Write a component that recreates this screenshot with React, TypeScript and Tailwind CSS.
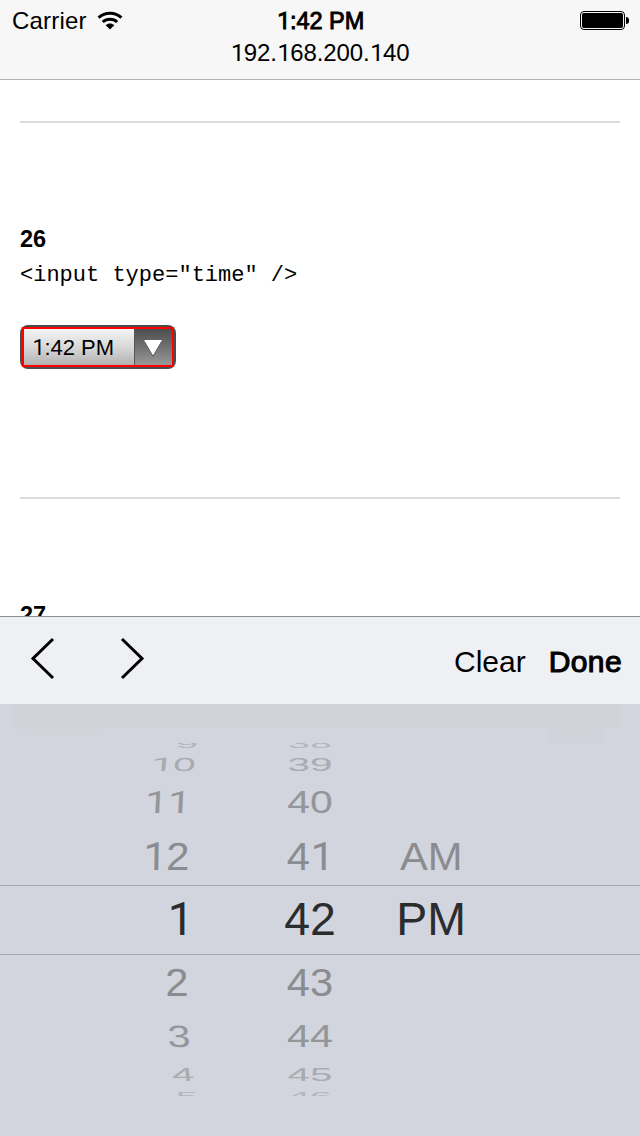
import { Fragment } from "react";

/** Text whose digit "1" is drawn without a foot serif. */
function Label({ text }: { text: string }) {
  return (
    <>
      {text.split(/(1)/).map((part, i) =>
        part === "1" ? (
          <span key={i} className="relative left-[0.02em] font-[Roboto,sans-serif] leading-[0]">1</span>
        ) : (
          <Fragment key={i}>{part}</Fragment>
        ),
      )}
    </>
  );
}

function StatusBar() {
  return (
    <header className="h-20 shrink-0 border-b border-[#b2b2b2] bg-[#f7f7f7]">
      <div className="grid h-[41px] grid-cols-3 items-center pr-[11px] pl-3">
        <div className="flex items-center gap-[10px]">
          <span className="text-[24px] leading-[41px] tracking-[0.2px]">Carrier</span>
          <svg width="26" height="20" viewBox="0 0 26 20" fill="none" className="mt-px">
            <path d="M1.6 6.7C8 .6 18 .6 24.4 6.7" stroke="#000" strokeWidth="3" />
            <path d="M5.8 11C9.8 7.2 16.2 7.2 20.2 11" stroke="#000" strokeWidth="3" />
            <path d="M8.7 14.2C11.2 12 14.8 12 17.3 14.2L13 18.5Z" fill="#000" />
          </svg>
        </div>
        <div className="pt-[2px] text-center text-[23.5px] leading-[39px] whitespace-nowrap [-webkit-text-stroke:0.9px_black]">
          <Label text="1:42 PM" />
        </div>
        <div className="flex items-center justify-end">
          <div className="h-[19px] w-[45px] rounded-[4px] border border-black p-px">
            <div className="h-full w-full rounded-[2px] bg-black" />
          </div>
          <div className="ml-px h-[7px] w-[3px] rounded-r-full bg-black" />
        </div>
      </div>
      <div className="text-center text-[24px] leading-[24px] tracking-[-0.1px]">
        <Label text="192.168.200.140" />
      </div>
    </header>
  );
}

function TimeInput() {
  return (
    <div className="h-11 w-[156px] rounded-[8px] bg-[#4c4c4c] p-[2px]">
      <div className="flex h-10 w-[152px] border-2 border-[#ff0000]">
        <div className="w-[110px] bg-linear-to-b from-[#f4f4f4] via-[#d8d8d8] to-[#b2b2b2] pl-2 text-[22px] leading-[37px] whitespace-nowrap">
          <Label text="1:42 PM" />
        </div>
        <div className="flex flex-1 items-center justify-center border-l border-[#555] bg-linear-to-b from-[#4d4d4d] to-[#999] pt-[3px] pr-px">
          <svg width="20" height="19" viewBox="0 0 20 19">
            <path d="M1 1.5H19L10 18Z" fill="#444" />
            <path d="M1 1H19L10 16.5Z" fill="#fff" />
          </svg>
        </div>
      </div>
    </div>
  );
}

function Toolbar() {
  return (
    <div className="flex h-[88px] shrink-0 items-center border-t border-[#8e8e90] bg-[#eff0f3] pr-[18px] pl-[30px]">
      <svg width="26" height="44" viewBox="0 0 26 44" fill="none" stroke="#000" strokeWidth="3" className="mb-[5px]">
        <path d="M23 3L3 22.5L23 42" />
      </svg>
      <svg width="26" height="44" viewBox="0 0 26 44" fill="none" stroke="#000" strokeWidth="3" className="mb-[5px] ml-[63px]">
        <path d="M3 3L23 22.5L3 42" />
      </svg>
      <div className="ml-auto flex gap-[23px] pt-[2px] text-[30px] leading-none">
        <span>Clear</span>
        <span className="tracking-[0.4px] [-webkit-text-stroke:1.1px_black]">Done</span>
      </div>
    </div>
  );
}

type Row = { hour: string; minute: string; period?: string; row: string; hourPad: string; glyph: string; tilt: string };

const rows: Row[] = [
  { hour: "9", minute: "38", row: "h-2 overflow-hidden text-[43px] leading-[2px] text-[#b3b5ba]", hourPad: "pr-[441px]", glyph: "scale-x-[0.92] scale-y-[0.24]", tilt: "" },
  { hour: "10", minute: "39", row: "h-[26px] text-[43px] leading-[26px] text-[#a9abb0]", hourPad: "pr-[443px]", glyph: "scale-x-[0.94] scale-y-[0.44]", tilt: "-skew-x-3" },
  { hour: "11", minute: "40", row: "h-[51px] text-[43px] leading-[51px] text-[#94969a]", hourPad: "pr-[449px]", glyph: "scale-x-[0.95] scale-y-[0.72]", tilt: "-skew-x-2" },
  { hour: "12", minute: "41", period: "AM", row: "h-[57px] text-[43px] leading-[57px] text-[#8b8c90]", hourPad: "pr-[450px]", glyph: "scale-x-[0.97] scale-y-[0.91]", tilt: "-skew-x-1" },
  { hour: "1", minute: "42", period: "PM", row: "h-[70px] border-y border-[#a5a7ac] text-[46.5px] leading-[67px] text-[#2b2c2e]", hourPad: "pr-[447px]", glyph: "", tilt: "" },
  { hour: "2", minute: "43", row: "h-[55px] text-[43px] leading-[55px] text-[#8b8c90]", hourPad: "pr-[451px]", glyph: "scale-x-[0.97] scale-y-[0.91]", tilt: "skew-x-1" },
  { hour: "3", minute: "44", row: "h-[52px] text-[43px] leading-[52px] text-[#94969a]", hourPad: "pr-[449px]", glyph: "scale-x-[0.96] scale-y-[0.72]", tilt: "skew-x-2" },
  { hour: "4", minute: "45", row: "h-[26px] text-[43px] leading-[25px] text-[#a9abb0]", hourPad: "pr-[445px]", glyph: "scale-x-[0.94] scale-y-[0.44]", tilt: "skew-x-3" },
  { hour: "5", minute: "46", row: "h-2 overflow-hidden text-[43px] leading-4 text-[#b3b5ba]", hourPad: "pr-[441px]", glyph: "scale-x-[0.92] scale-y-[0.26]", tilt: "" },
];

function TimePicker() {
  return (
    <div className="flex h-[432px] shrink-0 flex-col bg-[#d2d5dd]">
      <div className="h-[39px] shrink-0 pr-5 pl-3">
        <div className="h-[23px] bg-[#d0d3d8]" />
        <div className="flex justify-between pr-[18px] pl-[10px]">
          <div className="h-3 w-[80px] bg-linear-to-b from-[#d0d3d8] to-[#d2d5dd]" />
          <div className="h-4 w-[52px] bg-[#d0d3d9]" />
        </div>
      </div>
      {rows.map((r) => (
        <div key={r.minute} className={`grid shrink-0 grid-cols-1 grid-rows-1 ${r.row}`}>
          <div className={`col-start-1 row-start-1 h-0 text-right ${r.hourPad}`}>
            <span className={`inline-block origin-center ${r.glyph} ${r.tilt}`}><Label text={r.hour} /></span>
          </div>
          <div className="col-start-1 row-start-1 ml-[260px] h-0 w-[100px] text-center">
            <span className={`inline-block origin-center ${r.glyph}`}><Label text={r.minute} /></span>
          </div>
          {r.period && (
            <div className="col-start-1 row-start-1 ml-[380px] h-0 w-[102px] text-center">
              <span className={`inline-block origin-center ${r.glyph}`}>{r.period}</span>
            </div>
          )}
        </div>
      ))}
    </div>
  );
}

export default function App() {
  return (
    <div className="flex h-[1136px] w-[640px] flex-col overflow-hidden bg-white font-['Liberation_Sans',Arial,sans-serif] text-black">
      <StatusBar />
      <main className="h-[536px] shrink-0 overflow-hidden px-5 pt-[41px]">
        <hr className="border-t-2 border-[#dcdcdc]" />
        <h2 className="mt-[102px] text-[23.5px] leading-7 font-bold">26</h2>
        <code className="mt-[9px] block font-['Liberation_Mono',monospace] text-[22px] leading-7">{'<input type="time" />'}</code>
        <div className="mt-[35px]"><TimeInput /></div>
        <hr className="mt-32 border-t-2 border-[#dcdcdc]" />
        <h2 className="mt-[102px] text-[23.5px] leading-7 font-bold">27</h2>
      </main>
      <Toolbar />
      <TimePicker />
    </div>
  );
}
